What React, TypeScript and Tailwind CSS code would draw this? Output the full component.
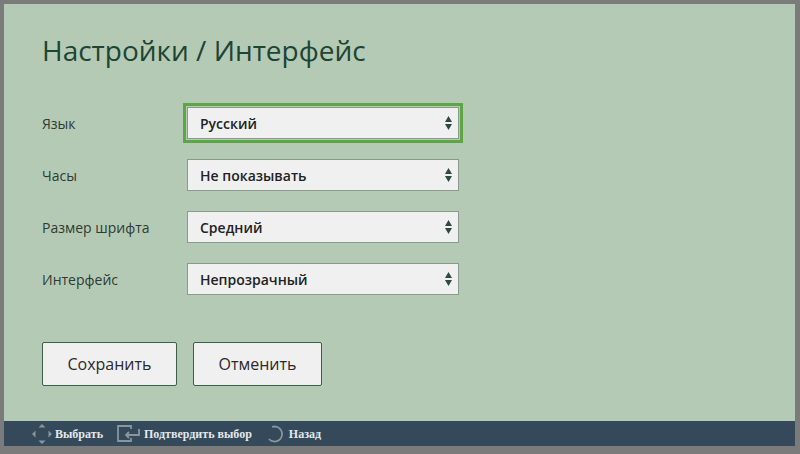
import React from "react";

const Arrows = () => (
  <span className="ml-auto flex flex-col items-center gap-[2px] text-[#2f4a3c]">
    <svg width="7" height="6" viewBox="0 0 7 6" fill="currentColor"><path d="M3.5 0L7 6H0z" /></svg>
    <svg width="7" height="6" viewBox="0 0 7 6" fill="currentColor"><path d="M0 0h7L3.5 6z" /></svg>
  </span>
);

function Row({ label, value, active }: { label: string; value: string; active?: boolean }) {
  return (
    <div className="flex items-center h-[52px]">
      <div className="w-[141px] text-[14px] text-[#2c3b35]">{label}</div>
      <div className={active ? "border-[3px] border-[#5da646] p-px" : "p-1"}>
        <div className="w-[272px] h-[32px] bg-[#f0f0f0] border border-[#8a9a8e] flex items-center pl-3 pr-[6px] text-[14px] font-semibold text-[#222]">
          {value}
          <Arrows />
        </div>
      </div>
    </div>
  );
}

export default function App() {
  return (
    <div className="w-[800px] h-[454px] bg-[#7b7b7b] pl-[4px] pt-[4px] pr-[5px] pb-[8px] flex" style={{ fontFamily: '"Open Sans", sans-serif' }}>
      <div className="flex-1 flex flex-col bg-[#b5cab4]">
        <div className="flex-1 pl-[38px] pt-[28px]">
          <h1 className="text-[28px] text-[#1d4535] leading-[36px]">Настройки / Интерфейс</h1>
          <div className="mt-[29px]">
            <Row label="Язык" value="Русский" active />
            <Row label="Часы" value="Не показывать" />
            <Row label="Размер шрифта" value="Средний" />
            <Row label="Интерфейс" value="Непрозрачный" />
          </div>
          <div className="flex gap-[16px] mt-[37px]">
            <button className="w-[135px] h-[44px] bg-[#f0f0f0] border border-[#3e5e4c] rounded-[2px] text-[16px] text-[#2a2a2a]">Сохранить</button>
            <button className="w-[129px] h-[44px] bg-[#f0f0f0] border border-[#3e5e4c] rounded-[2px] text-[16px] text-[#2a2a2a]">Отменить</button>
          </div>
        </div>
        <div className="h-[25px] bg-[#34495a] flex items-center pl-[27px] gap-[14px] text-[12px] font-bold text-[#e4e8ea]" style={{ fontFamily: '"Liberation Serif", serif' }}>
          <span className="flex items-center gap-[2px]">
            <svg width="22" height="22" viewBox="0 0 22 22" fill="#8a959d"><path d="M11 1l3.5 3.5h-7z M11 21l3.5-3.5h-7z M1 11l3.5-3.5v7z M21 11l-3.5-3.5v7z" /></svg>
            Выбрать
          </span>
          <span className="flex items-center gap-[4px]">
            <svg width="23" height="17" viewBox="0 0 23 17" fill="none" stroke="#8a959d" strokeWidth="1.8"><path d="M14 4V1H1v15h13v-3" /><path d="M22 4v6H9M12 7l-3 3 3 3" /></svg>
            Подтвердить выбор
          </span>
          <span className="flex items-center gap-[4px]">
            <svg width="19" height="19" viewBox="0 0 19 19" fill="none" stroke="#8a959d" strokeWidth="1.8"><path d="M6 3A7.5 7.5 0 1 1 3 15" /></svg>
            Назад
          </span>
        </div>
      </div>
    </div>
  );
}
